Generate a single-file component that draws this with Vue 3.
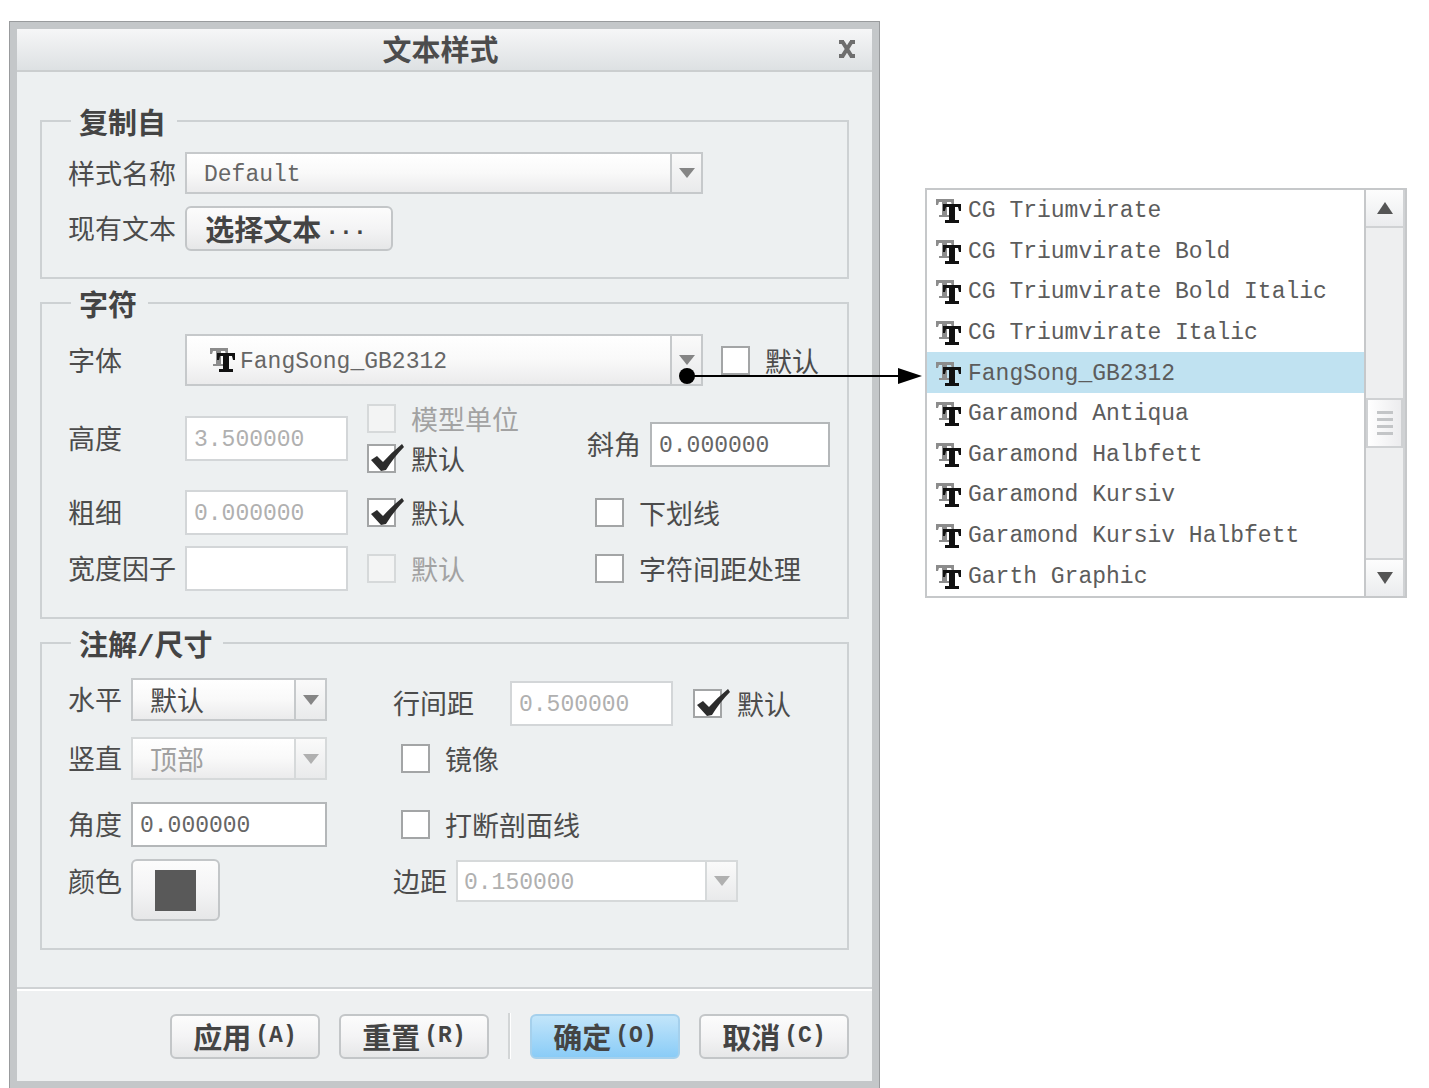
<script setup>
import { ref } from 'vue'

// 字体列表
const fonts = [
  'CG Triumvirate',
  'CG Triumvirate Bold',
  'CG Triumvirate Bold Italic',
  'CG Triumvirate Italic',
  'FangSong_GB2312',
  'Garamond Antiqua',
  'Garamond Halbfett',
  'Garamond Kursiv',
  'Garamond Kursiv Halbfett',
  'Garth Graphic'
]

const defaults = {
  styleName: 'Default',
  font: 'FangSong_GB2312',
  fontDefault: false,
  height: '3.500000',
  heightDefault: true,
  modelUnits: false,
  slant: '0.000000',
  thickness: '0.000000',
  thicknessDefault: true,
  underline: false,
  widthFactor: '',
  widthDefault: false,
  kerning: false,
  horizontal: '默认',
  vertical: '顶部',
  angle: '0.000000',
  spacing: '0.500000',
  spacingDefault: true,
  mirror: false,
  breakHatch: false,
  margin: '0.150000'
}

const form = ref({ ...defaults })

const reset = () => {
  form.value = { ...defaults }
}
</script>

<template>
  <div class="page">
    <!-- 共用图标 -->
    <svg class="symbols" aria-hidden="true">
      <symbol id="icon-check" viewBox="0 0 37 32">
        <path d="M4 16 L10 12 L16 18 Q25 8 35 0 L37 3 Q27 13 19 26 L14 27 Z" />
      </symbol>
      <symbol id="icon-down" viewBox="0 0 16 10">
        <path d="M0 0 H16 L8 10 Z" />
      </symbol>
      <symbol id="icon-font" viewBox="0 0 25 26">
        <path fill="#8c8c8c" d="M0 1 H18 V7 H16 L15 4 H11 V17 H13 V19 H3 V17 H6 V4 H3 L2 7 H0 Z" />
        <path fill="#111" d="M7 6 H25 V13 H23 L22 9 H19 V22 H23 V25 H9 V22 H13 V9 H10 L9 13 H7 Z" />
      </symbol>
    </svg>

    <form class="dialog" @submit.prevent>
      <header class="title-bar">
        <h1>文本样式</h1>
        <button type="button" class="close-btn" aria-label="关闭">
          <svg viewBox="0 0 18 18"><path d="M4 1 L14 17 M14 1 L4 17 M1 2 H6 M12 2 H17 M1 16 H6 M12 16 H17" /></svg>
        </button>
      </header>

      <div class="dialog-body">
        <fieldset>
          <legend>复制自</legend>
          <div class="copy-grid">
            <label for="style-name">样式名称</label>
            <div class="combo wide">
              <select id="style-name" v-model="form.styleName">
                <option>Default</option>
              </select>
              <span class="combo-arrow"><svg><use href="#icon-down" /></svg></span>
            </div>
            <label for="pick-text">现有文本</label>
            <button id="pick-text" type="button" class="btn pick-btn">选择文本<span class="mono">...</span></button>
          </div>
        </fieldset>

        <fieldset>
          <legend>字符</legend>
          <div class="char-grid">
            <label for="font">字体</label>
            <div class="font-row">
              <div class="combo wide tall">
                <select id="font" v-model="form.font">
                  <option v-for="f in fonts" :key="f">{{ f }}</option>
                </select>
                <svg class="font-icon"><use href="#icon-font" /></svg>
                <span class="combo-arrow"><svg><use href="#icon-down" /></svg></span>
                <!-- 指向展开列表的箭头 -->
                <svg class="pointer" viewBox="0 0 243 18" aria-hidden="true">
                  <circle cx="8" cy="9" r="8" />
                  <path d="M8 8 H222 V10 H8 Z M219 1 L243 9 L219 17 Z" />
                </svg>
              </div>
              <label class="check">
                <span class="tick"><input v-model="form.fontDefault" type="checkbox" /><svg><use href="#icon-check" /></svg></span>
                默认
              </label>
            </div>

            <label for="height">高度</label>
            <input id="height" v-model="form.height" class="text" :disabled="form.heightDefault" />
            <div class="check-stack">
              <label class="check disabled">
                <span class="tick"><input v-model="form.modelUnits" type="checkbox" disabled /><svg><use href="#icon-check" /></svg></span>
                模型单位
              </label>
              <label class="check">
                <span class="tick"><input v-model="form.heightDefault" type="checkbox" /><svg><use href="#icon-check" /></svg></span>
                默认
              </label>
            </div>
            <div class="slant">
              <label for="slant">斜角</label>
              <input id="slant" v-model="form.slant" class="text" />
            </div>

            <label for="thickness">粗细</label>
            <input id="thickness" v-model="form.thickness" class="text" :disabled="form.thicknessDefault" />
            <label class="check">
              <span class="tick"><input v-model="form.thicknessDefault" type="checkbox" /><svg><use href="#icon-check" /></svg></span>
              默认
            </label>
            <label class="check indent">
              <span class="tick"><input v-model="form.underline" type="checkbox" /><svg><use href="#icon-check" /></svg></span>
              下划线
            </label>

            <label for="width-factor">宽度因子</label>
            <input id="width-factor" v-model="form.widthFactor" class="text" disabled />
            <label class="check disabled">
              <span class="tick"><input v-model="form.widthDefault" type="checkbox" disabled /><svg><use href="#icon-check" /></svg></span>
              默认
            </label>
            <label class="check indent">
              <span class="tick"><input v-model="form.kerning" type="checkbox" /><svg><use href="#icon-check" /></svg></span>
              字符间距处理
            </label>
          </div>
        </fieldset>

        <fieldset>
          <legend>注解<span class="slash">/</span>尺寸</legend>
          <div class="note-grid">
            <label for="horizontal">水平</label>
            <div class="combo cjk">
              <select id="horizontal" v-model="form.horizontal">
                <option>默认</option>
              </select>
              <span class="combo-arrow"><svg><use href="#icon-down" /></svg></span>
            </div>
            <div class="spacing">
              <label for="spacing">行间距</label>
              <input id="spacing" v-model="form.spacing" class="text" :disabled="form.spacingDefault" />
              <label class="check">
                <span class="tick"><input v-model="form.spacingDefault" type="checkbox" /><svg><use href="#icon-check" /></svg></span>
                默认
              </label>
            </div>

            <label for="vertical">竖直</label>
            <div class="combo cjk disabled">
              <select id="vertical" v-model="form.vertical" disabled>
                <option>顶部</option>
              </select>
              <span class="combo-arrow"><svg><use href="#icon-down" /></svg></span>
            </div>
            <label class="check indent">
              <span class="tick"><input v-model="form.mirror" type="checkbox" /><svg><use href="#icon-check" /></svg></span>
              镜像
            </label>

            <label for="angle">角度</label>
            <input id="angle" v-model="form.angle" class="text" />
            <label class="check indent">
              <span class="tick"><input v-model="form.breakHatch" type="checkbox" /><svg><use href="#icon-check" /></svg></span>
              打断剖面线
            </label>

            <label for="color" class="top">颜色</label>
            <button id="color" type="button" class="btn color-btn"><span class="swatch"></span></button>
            <div class="margin-row top">
              <label for="margin">边距</label>
              <div class="combo disabled editable">
                <input id="margin" v-model="form.margin" disabled />
                <span class="combo-arrow"><svg><use href="#icon-down" /></svg></span>
              </div>
            </div>
          </div>
        </fieldset>
      </div>

      <footer class="actions">
        <button type="button" class="btn">应用<span class="mono">(A)</span></button>
        <button type="button" class="btn" @click="reset">重置<span class="mono">(R)</span></button>
        <span class="divider"></span>
        <button type="submit" class="btn primary">确定<span class="mono">(O)</span></button>
        <button type="button" class="btn">取消<span class="mono">(C)</span></button>
      </footer>
    </form>

    <div class="font-list">
      <ul role="listbox" aria-label="字体">
        <li
          v-for="f in fonts"
          :key="f"
          role="option"
          :aria-selected="form.font === f"
          :class="{ active: form.font === f }"
          @click="form.font = f"
        >
          <svg class="font-icon"><use href="#icon-font" /></svg>
          {{ f }}
        </li>
      </ul>
      <div class="scrollbar">
        <button type="button" class="scroll-btn" aria-label="向上"><svg viewBox="0 0 16 12"><path d="M0 12 H16 L8 0 Z" /></svg></button>
        <div class="track">
          <div class="thumb"><i></i><i></i><i></i><i></i></div>
        </div>
        <button type="button" class="scroll-btn" aria-label="向下"><svg viewBox="0 0 16 12"><path d="M0 0 H16 L8 12 Z" /></svg></button>
      </div>
    </div>
  </div>
</template>

<style>
body { margin: 0; background: #fff; }
</style>

<style scoped>
.page {
  display: grid; grid-template-columns: 871fr 482fr; column-gap: 45px;
  align-items: start; padding: 21px 22px 0 9px;
  font-family: "Noto Sans CJK SC", sans-serif; font-size: 27px; line-height: 40px;
  color: #4c4c4c;
}
.page * { box-sizing: border-box; }
.symbols { position: absolute; width: 0; height: 0; }
label { white-space: nowrap; }

/* 对话框 */
.dialog {
  border: 1px solid #999b9d; border-bottom: none; padding: 7px;
  background: #c4c7c9;
}
.title-bar {
  display: grid; grid-template-columns: 1fr auto; align-items: center;
  height: 43px; padding: 0 16px 2px; border-bottom: 2px solid #cbcecf;
  background: linear-gradient(#f6f6f7, #dde1e3);
}
.title-bar h1 {
  grid-area: 1 / 1 / 2 / 3; margin: 0; padding-right: 8px;
  font-size: 29px; line-height: 39px; font-weight: 700; text-align: center;
}
.close-btn { grid-area: 1 / 2; display: flex; padding: 0; border: none; background: none; cursor: pointer; }
.close-btn svg { width: 18px; height: 18px; fill: none; stroke: #6e6e6e; stroke-width: 4; }
.dialog-body { padding: 29px 23px 37px; background: #edf0f1; }

fieldset {
  min-width: 0; margin: 0 0 4px; padding: 0 17px 0 26px;
  border: 2px solid #cdd1d3;
}
fieldset:last-child { margin-bottom: 0; }
legend { height: 40px; margin-left: 3px; padding: 0 11px 0 8px; font-size: 29px; font-weight: 700; color: #444; }
.slash { font-family: "Liberation Mono", monospace; }

.copy-grid {
  display: grid; grid-template-columns: 117px 1fr; grid-template-rows: 42px 44px;
  row-gap: 12px; align-items: center; padding: 11px 0 27px;
}
.char-grid {
  display: grid; grid-template-columns: 117px 163px 239px 1fr;
  grid-template-rows: 52px 104px 44px 68px; align-items: center; padding: 11px 0 15px;
}
.char-grid > .check:not(.indent), .check-stack { margin-left: 19px; }
.note-grid {
  display: grid; grid-template-columns: 63px 196px 1fr;
  grid-template-rows: 56px 62px 70px 62px; align-items: center; padding: 8px 0 27px;
}
.note-grid .spacing, .note-grid .margin-row { margin-left: 66px; }
.font-row { grid-column: 2 / 5; display: flex; align-items: center; gap: 18px; }
.check-stack { display: flex; flex-direction: column; gap: 11px; }
.slant { display: flex; align-items: center; gap: 9px; padding-top: 12px; }
.slant .text { flex: 1; }
.spacing { display: flex; align-items: center; padding-top: 8px; }
.spacing .text { width: 163px; margin: 0 20px 0 36px; }
.margin-row { display: flex; align-items: center; gap: 9px; height: 44px; }
.top { align-self: start; line-height: 44px; }

/* 输入框 */
.text, .combo select, .combo input {
  min-width: 0; margin: 0; border-radius: 0; outline: none;
  font-family: "Liberation Mono", monospace; font-size: 23px; color: #666;
}
.text { width: 100%; height: 45px; padding: 4px 7px 0; border: 2px solid #b4b7b9; background: #fff; }
.text:disabled { border-color: #d3d6d8; color: #b0b0b0; }

.combo { position: relative; display: grid; height: 42px; grid-template-columns: 1fr 33px; }
.combo.wide { flex: 0 1 518px; width: 518px; max-width: 100%; }
.combo.tall { height: 52px; }
.combo select, .combo input {
  grid-area: 1 / 1 / 2 / 3; width: 100%; padding: 4px 40px 0 17px;
  border: 2px solid #c6c9cb; appearance: none;
  background: linear-gradient(#fff, #f9f9f9 50%, #ebebec);
}
.combo.tall select { padding-left: 53px; }
.combo.cjk select { padding-top: 0; font-family: "Noto Sans CJK SC", sans-serif; font-size: 27px; color: #4c4c4c; }
.combo-arrow {
  grid-area: 1 / 2; display: flex; align-items: center; justify-content: center;
  margin: 2px 2px 2px 0; border-left: 2px solid #c6c9cb;
  background: linear-gradient(#fafafa, #e9eaeb); pointer-events: none;
}
.combo-arrow svg { width: 16px; height: 10px; fill: #858585; }
.combo .font-icon { grid-area: 1 / 1; align-self: center; margin-left: 25px; pointer-events: none; }
.combo.disabled select, .combo.disabled input { border-color: #d6d9da; color: #a0a0a0; opacity: 1; }
.combo.disabled .combo-arrow { border-color: #d6d9da; }
.combo.disabled .combo-arrow svg { fill: #b0b0b0; }
.combo.editable { width: 282px; }
.combo.editable input { padding-left: 6px; background: #fff; color: #b0b0b0; }
.font-icon { flex: none; width: 25px; height: 26px; }
.pointer { position: absolute; left: 494px; top: 33px; z-index: 2; width: 243px; height: 18px; pointer-events: none; }

.check { display: flex; align-items: center; gap: 15px; height: 29px; line-height: 29px; }
.check.indent { margin-left: 8px; }
.note-grid > .check.indent { margin-left: 74px; }
.check.disabled { color: #a2a2a2; }
.tick { display: grid; flex: none; width: 29px; height: 29px; }
.tick input {
  grid-area: 1 / 1; width: 29px; height: 29px; margin: 0; appearance: none;
  border: 2px solid #a3a5a6; background: #fff;
}
.tick input:disabled { border-color: #d6d9da; background: #f3f4f4; }
.tick svg { grid-area: 1 / 1; align-self: end; display: none; width: 37px; height: 32px; fill: #2c2c2c; pointer-events: none; }
.tick input:checked + svg { display: block; }

/* 按钮 */
.btn {
  display: flex; align-items: center; justify-content: center; gap: 4px;
  height: 45px; padding: 0; border: 2px solid #c3c6c8; border-radius: 6px;
  background: linear-gradient(#fcfcfc, #f4f4f5 50%, #e6e7e8);
  font-family: inherit; font-size: 29px; line-height: 40px; font-weight: 700; color: #444;
  white-space: nowrap; cursor: pointer;
}
.btn .mono { font-family: "Liberation Mono", monospace; font-size: 23px; }
.pick-btn { width: 208px; padding-right: 6px; }
.color-btn { width: 89px; height: 62px; }
.swatch { width: 41px; height: 41px; background: #595959; }
.primary { border-color: #a5d0ec; background: linear-gradient(#c2e5fa, #8accf7); }

.actions {
  display: flex; justify-content: flex-end; align-items: center; gap: 19px;
  height: 94px; padding: 2px 23px 0 0; border-top: 2px solid #cfd2d4;
  background: #eef0f1; box-shadow: inset 0 2px #fff;
}
.actions .btn { width: 150px; }
.divider { width: 3px; height: 46px; border-left: 2px solid #d2d5d6; border-right: 1px solid #fff; }

/* 展开的字体列表 */
.font-list {
  display: grid; grid-template-columns: 1fr 41px; height: 410px; margin-top: 167px;
  border: 2px solid #c6c8ca; background: #fff;
}
.font-list ul { display: grid; grid-auto-rows: 1fr; margin: 0; padding: 0; list-style: none; }
.font-list li {
  display: flex; align-items: center; gap: 7px; padding: 2px 0 0 9px; line-height: 38px;
  font-family: "Liberation Mono", monospace; font-size: 23px; color: #5c5c5c;
  white-space: nowrap; cursor: default;
}
.font-list li.active { background: #c0e2f1; }
.scrollbar { display: flex; flex-direction: column; border-left: 2px solid #c6c8ca; border-right: 2px solid #d0d2d4; background: #eeeff0; }
.scroll-btn {
  display: flex; align-items: center; justify-content: center; height: 38px; padding: 0;
  border: none; background: linear-gradient(#fdfdfd, #ebecee);
}
.scroll-btn:first-child { border-bottom: 2px solid #d0d2d4; }
.scroll-btn:last-child { border-top: 2px solid #d0d2d4; }
.scroll-btn svg { width: 16px; height: 12px; fill: #555; }
.track { flex: 1; padding-top: 170px; }
.thumb {
  display: flex; flex-direction: column; align-items: center; justify-content: center; gap: 4px;
  height: 50px; border: 2px solid #cfd1d3; background: linear-gradient(90deg, #fff, #ececee);
}
.thumb i { width: 16px; height: 3px; background: #c3c5c7; }
</style>
